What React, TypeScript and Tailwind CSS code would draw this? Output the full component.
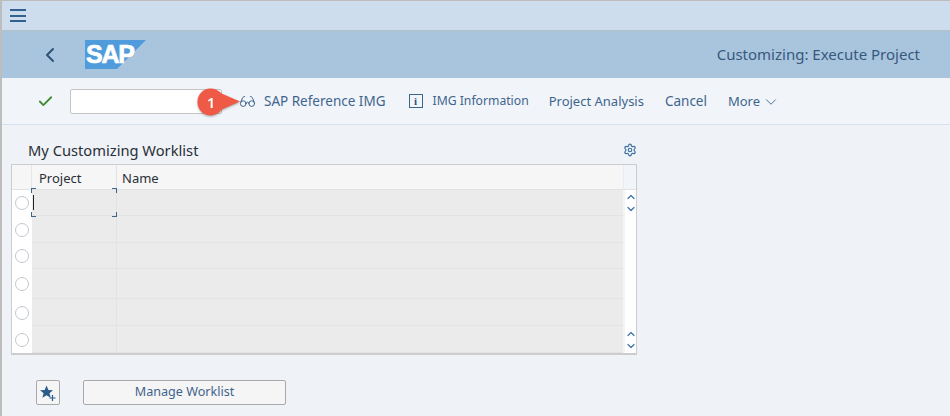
import { ChevronDown, ChevronLeft, ChevronUp, Check, Glasses, Settings } from 'lucide-react';

const rowHeights = ['h-[26px]', 'h-[27px]', 'h-[26px]', 'h-[30px]', 'h-[27px]', 'h-[27px]'];

function SapLogo() {
  return (
    <div className="relative h-[29px] w-[61px]">
      <svg width="61" height="29" viewBox="0 0 61 29" className="absolute inset-0">
        <polygon points="0,0 61,0 32,29 0,29" fill="#4f9bdc" />
      </svg>
      <span className="absolute left-[1px] top-[1px] font-['Liberation_Sans'] text-[25px] leading-[26px] font-bold tracking-[-1.2px] text-white [-webkit-text-stroke:0.7px_white]">
        SAP
      </span>
    </div>
  );
}

function Callout() {
  return (
    <div className="absolute left-[195px] top-[10px] h-[28px] w-[44px] drop-shadow-[0_1px_1px_rgba(0,0,0,0.3)]">
      <svg width="44" height="28" viewBox="0 0 44 28" className="absolute inset-0">
        <path d="M13.5 0.5 C18 0.5 22 2.5 24.5 5.5 L43 13.5 L25 21.5 C22 25 18 27.5 13.5 27.5 C6 27.5 0.5 21.5 0.5 14 C0.5 6.5 6 0.5 13.5 0.5 Z" fill="#ef5a47" />
      </svg>
      <span className="absolute left-0 top-0 flex h-[28px] w-[28px] items-center justify-center text-[15px] font-semibold text-white">
        1
      </span>
    </div>
  );
}

function ToolButton({ label, icon, className }: { label: string; icon?: React.ReactNode; className?: string }) {
  return (
    <div className={`flex items-center pt-[1px] whitespace-nowrap text-[#3f648c] ${className ?? ''}`}>
      {icon}
      <span>{label}</span>
    </div>
  );
}

function InfoIcon() {
  return (
    <div className="flex h-[14px] w-[14px] items-center justify-center border border-[#3f648c] font-['Liberation_Serif'] text-[11px] leading-none font-bold text-[#2f5478]">
      i
    </div>
  );
}

function StarPlus() {
  return (
    <svg width="16" height="16" viewBox="0 0 16 16">
      <polygon points="6.5,0.5 8.4,5 13,5.2 9.5,8.2 10.7,12.8 6.5,10.3 2.4,12.8 3.6,8.2 0,5.2 4.7,5" fill="#2b5c8a" />
      <path d="M12.5 10v6M9.5 13h6" stroke="#2b5c8a" strokeWidth="1.2" />
    </svg>
  );
}

function ScrollCell({ up, down }: { up?: boolean; down?: boolean }) {
  return (
    <div className="flex w-[13px] shrink-0 flex-col items-center justify-center border-l-2 border-[#f1f4f8] bg-white">
      {up && <ChevronUp size={12} strokeWidth={2.4} className="text-[#3a72a8]" />}
      {down && <ChevronDown size={12} strokeWidth={2.4} className="text-[#3a72a8]" />}
    </div>
  );
}

export default function App() {
  return (
    <div className="h-[416px] w-[950px] overflow-hidden border-t border-l-2 border-[#bdbdbd] bg-[#eff3f8] font-['Noto_Sans',sans-serif]">
      <div className="flex h-[30px] items-center border-b border-[#b7bfc7] bg-[#cddded] pl-[8px]">
        <div className="flex w-[16px] flex-col gap-[3.5px]">
          <div className="h-[2px] bg-[#33618e]" />
          <div className="h-[2px] bg-[#33618e]" />
          <div className="h-[2px] bg-[#33618e]" />
        </div>
      </div>
      <div className="flex h-[47px] items-center bg-[#a9c4dd] pr-[30px]">
        <ChevronLeft size={24} strokeWidth={2} className="ml-[36px] text-[#2c5378]" />
        <div className="ml-[23px]">
          <SapLogo />
        </div>
        <div className="ml-auto text-[15px] text-[#36597d]">Customizing: Execute Project</div>
      </div>
      <div className="relative flex h-[47px] items-center border-b border-[#d3e1f0] bg-[#f1f5fa]">
        <Check size={17} strokeWidth={2.5} className="ml-[35px] text-[#3d8a2e]" />
        <div className="ml-[16px] h-[25px] w-[152px] rounded-[2px] border border-[#c4c4c4] bg-white" />
        <ToolButton
          label="SAP Reference IMG"
          icon={<Glasses size={17} strokeWidth={1.4} className="text-[#3f648c]" />}
          className="ml-[17px] gap-[8px] text-[13.5px]"
        />
        <ToolButton label="IMG Information" icon={<InfoIcon />} className="ml-[23px] gap-[10px] text-[12.2px]" />
        <ToolButton label="Project Analysis" className="ml-[20px] text-[13px]" />
        <ToolButton label="Cancel" className="ml-[21px] text-[13.5px]" />
        <div className="ml-[21px] flex items-center gap-[2px] pt-[1px] text-[13px] text-[#3f648c]">
          More
          <ChevronDown size={18} strokeWidth={1.2} />
        </div>
        <Callout />
      </div>
      <div className="w-[635px] pl-[9px]">
        <div className="flex h-[39px] items-end justify-between pb-[4px] pl-[17px]">
          <span className="text-[14.7px] leading-[20px] text-[#2a2f36]">My Customizing Worklist</span>
          <Settings size={14} strokeWidth={2} className="mb-[3px] text-[#3f6f9f]" />
        </div>
        <div className="border border-b-2 border-[#cdcdcd] bg-white">
          <div className="flex h-[25px] border-b border-[#e2e2e2] bg-[#f6f6f6] text-[13px] text-[#2a2f36]">
            <div className="w-[20px] shrink-0 border-r border-[#e6e6e6]" />
            <div className="flex w-[85px] shrink-0 items-center border-r border-[#e2e2e2] pt-[3px] pl-[7px]">Project</div>
            <div className="flex flex-1 items-center pt-[3px] pl-[5px]">Name</div>
            <div className="w-[13px] shrink-0 border-l border-[#e6edf4] bg-[#f1f4f8]" />
          </div>
          {rowHeights.map((h, i) => (
            <div key={i} className={`flex ${h}`}>
              <div className="flex w-[20px] shrink-0 items-center justify-center bg-white">
                <div className="h-[14px] w-[14px] rounded-full border border-[#c2c8cf] bg-white" />
              </div>
              <div className={`relative w-[85px] shrink-0 border-r border-b border-[#e3e3e3] bg-[#ebebeb] ${i === 0 ? 'z-10' : ''}`}>
                {i === 0 && (
                  <>
                    <div className="absolute top-[-2px] left-[-1px] h-[5px] w-[5px] border-t border-l border-[#3f648c]" />
                    <div className="absolute top-[-2px] right-[-1px] h-[5px] w-[5px] border-t border-r border-[#3f648c]" />
                    <div className="absolute bottom-[-2px] left-[-1px] h-[5px] w-[5px] border-b border-l border-[#3f648c]" />
                    <div className="absolute right-[-1px] bottom-[-2px] h-[5px] w-[5px] border-r border-b border-[#3f648c]" />
                    <div className="absolute top-[5px] left-[1px] h-[15px] w-px bg-[#222]" />
                  </>
                )}
              </div>
              <div className="flex-1 border-b border-[#e3e3e3] bg-[#ebebeb]" />
              <ScrollCell up={i === 0 || i === 5} down={i === 0 || i === 5} />
            </div>
          ))}
        </div>
        <div className="mt-[25px] flex items-center pl-[25px]">
          <div className="flex h-[25px] w-[24px] items-center justify-center rounded-[2px] border border-[#a9a9a9] bg-[#f5f5f5]">
            <StarPlus />
          </div>
          <div className="ml-[23px] flex h-[25px] w-[203px] items-center justify-center rounded-[2px] border border-[#a9a9a9] bg-[#f5f5f5] text-[12.6px] text-[#3f648c]">
            Manage Worklist
          </div>
        </div>
      </div>
    </div>
  );
}
